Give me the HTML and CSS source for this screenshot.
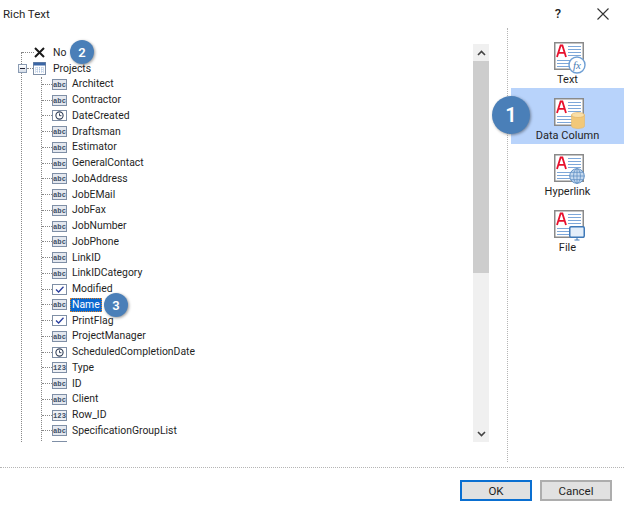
FILE: index.html
```html
<!DOCTYPE html>
<html lang="en">
<head>
<meta charset="utf-8">
<title>Rich Text</title>
<link rel="stylesheet" href="styles.css">
</head>
<body>
<svg class="defs" width="0" height="0" aria-hidden="true">
  <symbol id="t-abc" viewBox="0 0 15 11"><rect x=".5" y=".5" width="14" height="10" fill="#e4e8ef" stroke="#7f8fa6"/><text x="7.5" y="8.2" text-anchor="middle" font-family="Liberation Mono" font-size="7.2" font-weight="700" fill="#3d4f68">abc</text></symbol>
  <symbol id="t-num" viewBox="0 0 15 11"><rect x=".5" y=".5" width="14" height="10" fill="#eef0f4" stroke="#7f8fa6"/><text x="7.5" y="8.2" text-anchor="middle" font-family="Liberation Mono" font-size="7.2" font-weight="700" fill="#3d4f68">123</text></symbol>
  <symbol id="t-date" viewBox="0 0 15 11"><rect x=".5" y=".5" width="14" height="10" fill="#fff" stroke="#7f8fa6"/><circle cx="7.5" cy="5.5" r="3.6" fill="#fff" stroke="#33415a" stroke-width="1.1"/><path d="M7.5 3.4V5.7H9.4" fill="none" stroke="#33415a"/></symbol>
  <symbol id="t-bool" viewBox="0 0 15 11"><rect x=".5" y=".5" width="14" height="10" fill="#fff" stroke="#7f8fa6"/><path d="M4 5.5L6.6 8 11.5 2.8" fill="none" stroke="#2b3f9e" stroke-width="1.3"/></symbol>
  <symbol id="doc" viewBox="0 0 30 28"><rect x=".75" y=".75" width="28.5" height="26.5" fill="#fff" stroke="#8a8a8a" stroke-width="1.5"/><path d="M3 15L6.6 3.5H8.4L12 15M4.6 10.8H10.4" fill="none" stroke="#e8112d" stroke-width="1.8"/><path d="M14 4.5H27M14 7.5H27M14 10.5H27M14 13.5H27M3 18.5H27M3 21.5H27M3 24.5H27" stroke="#7da7d9" stroke-width="1.1"/></symbol>
</svg>

<div class="dialog">
  <header class="titlebar">
    <span class="title">Rich Text</span>
    <span class="help">?</span>
    <svg class="close" width="12" height="12" viewBox="0 0 12 12"><path d="M.5.5L11.5 11.5M11.5.5L.5 11.5" stroke="#333" stroke-width="1.1" fill="none"/></svg>
  </header>

  <main class="main">
    <section class="tree-panel">
      <div class="tree">
        <div class="root-line"></div>
        <div class="row root"><span class="hline"></span><svg class="x-icon" width="11" height="11" viewBox="0 0 11 11"><path d="M1 1L10 10M10 1L1 10" stroke="#1a1a1a" stroke-width="2" fill="none"/></svg><span class="label">No</span><span class="badge small b2">2</span></div>
        <div class="row root projects"><span class="expander"></span><span class="hline short"></span>
          <svg class="table-icon" width="13" height="13" viewBox="0 0 13 13"><rect x=".5" y=".5" width="12" height="12" fill="#fff" stroke="#7f8fa6"/><rect x=".5" y=".5" width="12" height="3" fill="#3b66a5"/><path d="M2 6H11M2 8H11M2 10H11M4 5V11M6.5 5V11M9 5V11" stroke="#a9c0de" stroke-dasharray="1 1"/></svg>
          <span class="label">Projects</span></div>
        <div class="children">
          <div class="child-line"></div>
          <div class="row"><span class="hline"></span><svg class="type"><use href="#t-abc"/></svg><span class="label">Architect</span></div>
          <div class="row"><span class="hline"></span><svg class="type"><use href="#t-abc"/></svg><span class="label">Contractor</span></div>
          <div class="row"><span class="hline"></span><svg class="type"><use href="#t-date"/></svg><span class="label">DateCreated</span></div>
          <div class="row"><span class="hline"></span><svg class="type"><use href="#t-abc"/></svg><span class="label">Draftsman</span></div>
          <div class="row"><span class="hline"></span><svg class="type"><use href="#t-abc"/></svg><span class="label">Estimator</span></div>
          <div class="row"><span class="hline"></span><svg class="type"><use href="#t-abc"/></svg><span class="label">GeneralContact</span></div>
          <div class="row"><span class="hline"></span><svg class="type"><use href="#t-abc"/></svg><span class="label">JobAddress</span></div>
          <div class="row"><span class="hline"></span><svg class="type"><use href="#t-abc"/></svg><span class="label">JobEMail</span></div>
          <div class="row"><span class="hline"></span><svg class="type"><use href="#t-abc"/></svg><span class="label">JobFax</span></div>
          <div class="row"><span class="hline"></span><svg class="type"><use href="#t-abc"/></svg><span class="label">JobNumber</span></div>
          <div class="row"><span class="hline"></span><svg class="type"><use href="#t-abc"/></svg><span class="label">JobPhone</span></div>
          <div class="row"><span class="hline"></span><svg class="type"><use href="#t-abc"/></svg><span class="label">LinkID</span></div>
          <div class="row"><span class="hline"></span><svg class="type"><use href="#t-abc"/></svg><span class="label">LinkIDCategory</span></div>
          <div class="row"><span class="hline"></span><svg class="type"><use href="#t-bool"/></svg><span class="label">Modified</span></div>
          <div class="row"><span class="hline"></span><svg class="type"><use href="#t-abc"/></svg><span class="label selected">Name</span><span class="badge small b3">3</span></div>
          <div class="row"><span class="hline"></span><svg class="type"><use href="#t-bool"/></svg><span class="label">PrintFlag</span></div>
          <div class="row"><span class="hline"></span><svg class="type"><use href="#t-abc"/></svg><span class="label">ProjectManager</span></div>
          <div class="row"><span class="hline"></span><svg class="type"><use href="#t-date"/></svg><span class="label">ScheduledCompletionDate</span></div>
          <div class="row"><span class="hline"></span><svg class="type"><use href="#t-num"/></svg><span class="label">Type</span></div>
          <div class="row"><span class="hline"></span><svg class="type"><use href="#t-abc"/></svg><span class="label">ID</span></div>
          <div class="row"><span class="hline"></span><svg class="type"><use href="#t-abc"/></svg><span class="label">Client</span></div>
          <div class="row"><span class="hline"></span><svg class="type"><use href="#t-num"/></svg><span class="label">Row_ID</span></div>
          <div class="row"><span class="hline"></span><svg class="type"><use href="#t-abc"/></svg><span class="label">SpecificationGroupList</span></div>
          <div class="row"><span class="hline"></span><svg class="type"><use href="#t-abc"/></svg><span class="label">SpecAssemblyXML</span></div>
        </div>
      </div>
      <div class="scrollbar">
        <span class="arrow"><svg width="9" height="6" viewBox="0 0 9 6"><path d="M1 5L4.5 1.5 8 5" fill="none" stroke="#444" stroke-width="1.6"/></svg></span>
        <div class="track"><div class="thumb"></div></div>
        <span class="arrow"><svg width="9" height="6" viewBox="0 0 9 6"><path d="M1 1L4.5 4.5 8 1" fill="none" stroke="#444" stroke-width="1.6"/></svg></span>
      </div>
    </section>

    <nav class="side">
      <div class="item">
        <span class="icon"><svg class="doc"><use href="#doc"/></svg>
          <svg class="over fx" width="18" height="18" viewBox="0 0 18 18"><circle cx="9" cy="9" r="8" fill="#fff" stroke="#6f9fd4" stroke-width="1.4"/><text x="9" y="13" text-anchor="middle" font-family="Liberation Serif" font-style="italic" font-size="11" fill="#4a7cb5">fx</text></svg></span>
        <span class="cap">Text</span>
      </div>
      <div class="item active">
        <span class="icon"><svg class="doc"><use href="#doc"/></svg>
          <svg class="over db" width="14" height="17" viewBox="0 0 14 17"><path d="M.5 3V14C.5 15.5 3.5 16.5 7 16.5S13.5 15.5 13.5 14V3Z" fill="#f2c879" stroke="#e5b868" stroke-width=".6"/><ellipse cx="7" cy="3" rx="6.5" ry="2.5" fill="#f9dfa9" stroke="#e0b060" stroke-width=".6"/></svg></span>
        <span class="cap">Data Column</span>
        <span class="badge large">1</span>
      </div>
      <div class="item">
        <span class="icon"><svg class="doc"><use href="#doc"/></svg>
          <svg class="over globe" width="16" height="16" viewBox="0 0 16 16"><circle cx="8" cy="8" r="7.3" fill="#c5d9ef" stroke="#5f8fc4"/><ellipse cx="8" cy="8" rx="3.4" ry="7.3" fill="none" stroke="#5f8fc4" stroke-width=".8"/><path d="M.8 8H15.2M2 4.3H14M2 11.7H14M8 .7V15.3" stroke="#5f8fc4" stroke-width=".8"/></svg></span>
        <span class="cap">Hyperlink</span>
      </div>
      <div class="item">
        <span class="icon"><svg class="doc"><use href="#doc"/></svg>
          <svg class="over mon" width="16" height="15" viewBox="0 0 16 15"><rect x=".75" y=".75" width="14.5" height="10.5" rx="1.2" fill="#e3eefa" stroke="#3f79b8" stroke-width="1.5"/><path d="M8 12V14M5.5 14H10.5" stroke="#3f79b8"/></svg></span>
        <span class="cap">File</span>
      </div>
    </nav>
  </main>

  <footer class="footer">
    <button class="btn primary">OK</button>
    <button class="btn">Cancel</button>
  </footer>
</div>
</body>
</html>
```
FILE: styles.css
```css
* { box-sizing: border-box; }
html, body { margin: 0; padding: 0; background: #fff; }
body { font-family: Roboto, "Noto Sans", sans-serif; font-size: 11px; color: #1f1f1f; overflow: hidden; }
.defs { position: absolute; }
.dialog { width: 624px; height: 511px; display: flex; flex-direction: column; }

.titlebar { height: 28px; display: flex; align-items: center; padding: 0 15px 1px 3px; flex: none; }
.title { flex: 1; font-size: 11.5px; }
.help { width: 10px; margin-right: 34px; font-size: 13px; font-weight: 500; text-align: center; }
.close { display: block; }

.main { flex: none; height: 434px; display: flex; }
.tree-panel { width: 508px; border-right: 1px dotted #b5b5b5; padding: 8px 18px 20px 0; display: flex; }
.tree { flex: 1; position: relative; overflow: hidden; padding-top: 9px; font-size: 10.4px; }
.root-line { position: absolute; left: 21px; top: 16px; bottom: 0; border-left: 1px dotted #888; }
.children { position: relative; }
.child-line { position: absolute; left: 41px; top: 0; bottom: 0; border-left: 1px dotted #888; }

.row { height: 15.75px; display: flex; align-items: center; position: relative; padding-left: 42px; white-space: nowrap; }
.hline { width: 10px; border-top: 1px dotted #888; flex: none; }
.type { width: 15px; height: 11px; flex: none; margin-right: 4px; }
.label { line-height: 14px; padding: 0 1px; }
.selected { background: #0a68d0; color: #fff; outline: 1px dotted #d9822b; outline-offset: -1px; margin-left: -1px; padding: 0 2px; }

.root { padding-left: 22px; }
.root .hline { width: 12px; }
.root .x-icon { flex: none; margin-right: 7px; }
.projects { padding-left: 18px; }
.expander { width: 9px; height: 9px; flex: none; border: 1px solid #8a9bb3; background: linear-gradient(#fff, #d5dde8); position: relative; }
.expander::after { content: ""; position: absolute; left: 1px; right: 1px; top: 3px; border-top: 1px solid #223; }
.projects .short { width: 6px; }
.table-icon { flex: none; margin-right: 6px; }

.badge { border-radius: 50%; background: #4a7fb8; color: #fff; font-weight: 600; display: flex; align-items: center; justify-content: center; box-shadow: 1px 1px 3px rgba(0,0,0,.4); flex: none; }
.small { width: 24px; height: 24px; font-size: 13px; position: absolute; }
.b2 { left: 70px; top: -5px; }
.b3 { left: 104px; top: -4px; }
.large { width: 38px; height: 38px; font-size: 20px; position: absolute; left: -19px; top: 8px; }

.scrollbar { width: 16px; flex: none; background: #f0f0f0; display: flex; flex-direction: column; margin-top: 8px; }
.arrow { height: 17px; flex: none; display: flex; align-items: center; justify-content: center; }
.track { flex: 1; }
.thumb { height: 212px; background: #cdcdcd; }

.side { width: 116px; padding: 4px 0 0 3px; display: flex; flex-direction: column; }
.item { height: 56px; display: flex; flex-direction: column; align-items: center; padding-top: 10px; position: relative; }
.item .cap { margin-top: 2px; line-height: 15px; }
.active { background: #b8d3fb; }
.icon { width: 30px; height: 28px; position: relative; display: block; margin-left: 2px; }
.doc { width: 30px; height: 28px; display: block; }
.over { position: absolute; }
.fx { right: -2px; bottom: -4px; }
.db { right: -1px; bottom: -3px; }
.globe { right: -1px; bottom: -2px; }
.mon { right: -1px; bottom: -3px; }

.footer { flex: 1; border-top: 1px dotted #b5b5b5; margin-top: 5px; display: flex; justify-content: flex-end; align-items: flex-start; gap: 8px; padding: 12px 12px 0 0; }
.btn { width: 72px; height: 21px; background: #e1e1e1; border: 2px solid #adadad; font: inherit; font-size: 11.5px; color: #1f1f1f; padding: 0; }
.primary { border-color: #0a6fd1; }
```
